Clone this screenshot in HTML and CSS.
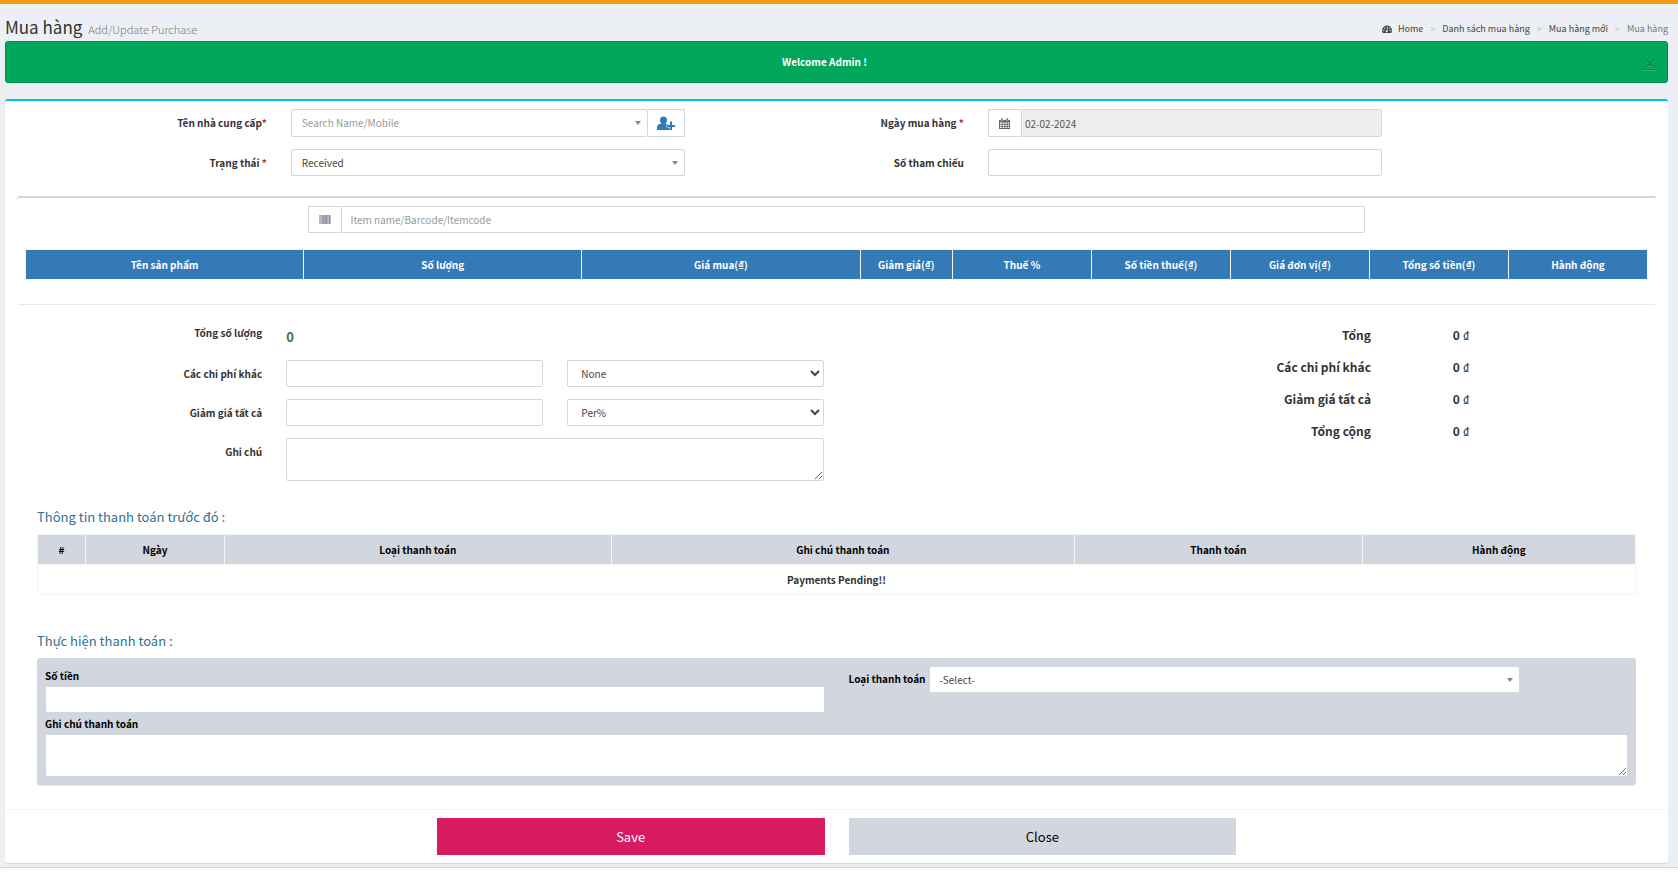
FILE: index.html
```html
<!DOCTYPE html>
<html lang="vi">
<head>
    <meta charset="UTF-8">
    <meta name="viewport" content="width=device-width, initial-scale=1.0">
    <title>Mua hàng</title>
    <link rel="stylesheet" href="styles.css">
</head>
<body>
    <div class="content-wrapper">
        <header class="content-header">
            <h1>Mua hàng <small>Add/Update Purchase</small></h1>
            <nav>
                <ol class="breadcrumb">
                    <li>
                        <a href="#">
                            <svg class="icon-dashboard" viewBox="0 0 20 16" aria-hidden="true">
                                <path fill="#444" d="M10 1a10 10 0 0 0-8.400 15h16.800A10 10 0 0 0 10 1z"/>
                                <g fill="#ecf0f5">
                                    <circle cx="3.600" cy="11" r="1.300"/>
                                    <circle cx="5.500" cy="6.400" r="1.300"/>
                                    <circle cx="10" cy="4.400" r="1.300"/>
                                    <circle cx="14.500" cy="6.400" r="1.300"/>
                                    <circle cx="16.400" cy="11" r="1.300"/>
                                    <path d="M11.600 6.500l-1 4.200a2.100 2.100 0 1 1-1.300-.3l1.200-4.200z"/>
                                </g>
                            </svg>
                            Home
                        </a>
                    </li>
                    <li><a href="#">Danh sách mua hàng</a></li>
                    <li><a href="#">Mua hàng mới</a></li>
                    <li class="active">Mua hàng</li>
                </ol>
            </nav>
        </header>

        <div class="alert">
            <strong>Welcome Admin !</strong>
            <a href="#" class="close" aria-label="close">×</a>
        </div>

        <form class="box">
            <div class="form-grid">
                <label for="supplier">Tên nhà cung cấp<span class="required">*</span></label>
                <div class="input-group">
                    <div class="select2">
                        <select id="supplier" class="form-control placeholder">
                            <option>Search Name/Mobile</option>
                        </select>
                    </div>
                    <button type="button" class="addon addon-user" aria-label="New supplier">
                        <svg viewBox="0 0 18 14" aria-hidden="true">
                            <path fill="#337ab7" d="M6.500 0.500C8.700.5 10 2 10 4c0 1.500-.6 2.700-1.500 3.400 1 .3 2 .6 2.700 1.100H9.500v3h3V14H0v-2.500C0 9 1.500 8 4.600 7.400 3.600 6.700 3 5.500 3 4c0-2 1.300-3.500 3.500-3.500z"/>
                            <path fill="#337ab7" d="M13 5.500h2V9h3v2h-3v3h-2v-3h-3V9h3z"/>
                        </svg>
                    </button>
                </div>
                <label for="purchaseDate">Ngày mua hàng <span class="required">*</span></label>
                <div class="input-group">
                    <span class="addon">
                        <svg class="icon-calendar" viewBox="0 0 12 12" aria-hidden="true">
                            <path fill="#666" d="M0 2h12v10H0z"/>
                            <path fill="#fff" d="M1 5h2v1.500H1zM4 5h2v1.500H4zM7 5h1.500v1.500H7zM9.500 5H11v1.500H9.500zM1 7.300h2v1.500H1zM4 7.300h2v1.500H4zM7 7.300h1.500v1.500H7zM9.500 7.300H11v1.500H9.500zM1 9.600h2V11H1zM4 9.600h2V11H4zM7 9.600h1.500V11H7zM9.500 9.600H11V11H9.500z"/>
                            <path fill="#666" stroke="#fff" stroke-width=".4" d="M2.200 0h1.800v3.200H2.200zM8 0h1.800v3.200H8z"/>
                        </svg>
                    </span>
                    <input type="text" id="purchaseDate" class="form-control date" value="02-02-2024" readonly>
                </div>

                <label for="status">Trạng thái <span class="required">*</span></label>
                <div class="select2">
                    <select id="status" class="form-control">
                        <option>Received</option>
                    </select>
                </div>
                <label for="reference">Số tham chiếu</label>
                <div>
                    <input type="text" id="reference" class="form-control">
                </div>
            </div>

            <section class="items-box">
                <div class="input-group item-search">
                    <span class="addon">
                        <svg class="icon-barcode" viewBox="0 0 12 10" aria-hidden="true">
                            <path fill="#a3a3ad" d="M0 0h12v10H0z"/>
                            <path fill="#8c8c99" d="M0 0h1v10H0zM7 0h1v10H7zM10 0h2v10h-2z"/>
                            <path fill="#d8d4dc" d="M1 0h1v10H1zM9 0h1v10H9z"/>
                        </svg>
                    </span>
                    <input type="text" class="form-control" placeholder="Item name/Barcode/Itemcode" aria-label="Item name/Barcode/Itemcode">
                </div>
                <table class="table items-table">
                    <thead>
                        <tr>
                            <th class="col-wide">Tên sản phẩm</th>
                            <th class="col-wide">Số lượng</th>
                            <th class="col-wide">Giá mua(₫)</th>
                            <th class="col-discount">Giảm giá(₫)</th>
                            <th>Thuế %</th>
                            <th>Số tiền thuế(₫)</th>
                            <th>Giá đơn vị(₫)</th>
                            <th>Tổng số tiền(₫)</th>
                            <th>Hành động</th>
                        </tr>
                    </thead>
                    <tbody></tbody>
                </table>
            </section>

            <div class="summary">
                <div class="charges">
                    <span class="label">Tổng số lượng</span>
                    <output class="total-qty">0</output>

                    <label for="otherCharges">Các chi phí khác</label>
                    <input type="text" id="otherCharges" class="form-control">
                    <select class="form-control native" aria-label="Các chi phí khác">
                        <option>None</option>
                    </select>

                    <label for="discountAll">Giảm giá tất cả</label>
                    <input type="text" id="discountAll" class="form-control">
                    <select class="form-control native" aria-label="Giảm giá tất cả">
                        <option>Per%</option>
                        <option>Fixed</option>
                    </select>

                    <label for="note">Ghi chú</label>
                    <textarea id="note" class="form-control note"></textarea>
                </div>

                <dl class="totals">
                    <dt>Tổng</dt>
                    <dd><b>0</b> ₫</dd>
                    <dt>Các chi phí khác</dt>
                    <dd><b>0</b> ₫</dd>
                    <dt>Giảm giá tất cả</dt>
                    <dd><b>0</b> ₫</dd>
                    <dt>Tổng cộng</dt>
                    <dd><b>0</b> ₫</dd>
                </dl>
            </div>

            <section class="payments">
                <h4>Thông tin thanh toán trước đó :</h4>
                <table class="table payments-table">
                    <thead>
                        <tr>
                            <th class="col-no">#</th>
                            <th class="col-date">Ngày</th>
                            <th class="col-type">Loại thanh toán</th>
                            <th class="col-note">Ghi chú thanh toán</th>
                            <th class="col-amount">Thanh toán</th>
                            <th>Hành động</th>
                        </tr>
                    </thead>
                    <tbody>
                        <tr>
                            <td colspan="6">Payments Pending!!</td>
                        </tr>
                    </tbody>
                </table>
            </section>

            <section class="payments">
                <h4>Thực hiện thanh toán :</h4>
                <div class="payment-panel">
                    <div class="payment-row">
                        <div class="payment-field">
                            <label for="amount">Số tiền</label>
                            <input type="text" id="amount" class="form-control">
                        </div>
                        <div class="payment-type">
                            <label for="paymentType">Loại thanh toán</label>
                            <div class="select2">
                                <select id="paymentType" class="form-control">
                                    <option>-Select-</option>
                                </select>
                            </div>
                        </div>
                    </div>
                    <div class="payment-field">
                        <label for="paymentNote">Ghi chú thanh toán</label>
                        <textarea id="paymentNote" class="form-control"></textarea>
                    </div>
                </div>
            </section>

            <div class="box-footer">
                <button type="button" class="btn btn-save">Save</button>
                <button type="button" class="btn btn-close">Close</button>
            </div>
        </form>
    </div>
</body>
</html>
```

FILE: styles.css
```css
* {
    margin: 0;
    padding: 0;
    box-sizing: border-box;
}

body {
    background: #fff;
    color: #333;
    font-family: "Noto Sans CJK SC", "Noto Sans", sans-serif;
    font-size: 10px;
    line-height: 16px;
}

a {
    color: #444;
    text-decoration: none;
}

input,
select,
textarea,
button {
    font: inherit;
}

.content-wrapper {
    background: #ecf0f5;
    border-top: 4px solid #f39c12;
    border-bottom: 1px solid #d2d6de;
    padding: 12px 10px 4px 5px;
}

/* Page title and breadcrumb */
.content-header {
    display: flex;
    justify-content: space-between;
    height: 25px;
}

.content-header h1 {
    font-size: 17px;
    font-weight: normal;
    line-height: 22px;
}

.content-header small {
    font-size: 11px;
    font-weight: 300;
    color: #777;
    padding-left: 2px;
}

.breadcrumb {
    display: flex;
    list-style: none;
    font-size: 9px;
    line-height: 26px;
}

.breadcrumb li + li::before {
    content: ">";
    color: #bbb;
    padding: 0 7px;
}

.breadcrumb .active {
    color: #777;
}

.icon-dashboard {
    width: 10px;
    height: 8px;
    margin-right: 4px;
    vertical-align: -1px;
}

.alert {
    display: flex;
    align-items: center;
    height: 42px;
    padding-right: 10px;
    margin-bottom: 16px;
    background: #00a65a;
    border: 1px solid #008d4c;
    border-radius: 3px;
    color: #fff;
}

.alert strong {
    flex: 1;
    text-align: center;
}

.alert .close {
    font-size: 14px;
    font-weight: bold;
    color: #000;
    opacity: 0.2;
    text-decoration: underline;
    text-shadow: 0 1px 0 #fff;
}

.box {
    background: #fff;
    border-top: 2px solid #00c0ef;
    border-radius: 3px;
    box-shadow: 0 1px 1px rgba(0, 0, 0, 0.1);
    padding-top: 8px;
}

/* Form controls */
label,
.label {
    font-weight: bold;
}

.required {
    color: #b5302b;
}

.form-control {
    display: block;
    width: 100%;
    height: 27px;
    padding: 0 10px;
    background: #fff;
    border: 1px solid #d2d6de;
    border-radius: 2px;
    color: #444;
}

.form-control::placeholder,
.form-control.placeholder {
    color: #999;
}

.form-control[readonly] {
    background: #eee;
    color: #555;
    padding-left: 3px;
}

.form-control.native {
    padding: 0 9px;
}

textarea.form-control {
    height: 43px;
    resize: vertical;
}

.input-group {
    display: flex;
}

.input-group .form-control {
    flex: 1;
}

.addon {
    display: flex;
    justify-content: center;
    align-items: center;
    width: 33px;
    border: 1px solid #d2d6de;
    border-right: 0;
    background: #fff;
}

.addon-user {
    width: 37px;
    border-right: 1px solid #d2d6de;
    border-left: 0;
}

.addon-user svg {
    width: 18px;
    height: 14px;
}

.icon-calendar {
    width: 11px;
    height: 11px;
}

.icon-barcode {
    width: 12px;
    height: 9px;
}

.select2 {
    position: relative;
    flex: 1;
}

.select2 select {
    appearance: none;
}

.select2::after {
    content: "";
    position: absolute;
    top: 50%;
    right: 7px;
    margin-top: -2px;
    border: 3px solid transparent;
    border-top: 4px solid #888;
    border-bottom: 0;
    pointer-events: none;
}

.form-grid {
    display: grid;
    grid-template-columns: 2fr 3fr 2fr 3fr 2fr;
    row-gap: 12px;
    margin: 0 -5px;
    padding-bottom: 20px;
}

.form-grid > * {
    margin: 0 12px;
}

.form-grid > label {
    text-align: right;
    padding-top: 6px;
}

.form-grid > :nth-child(4n + 1) {
    grid-column: 1;
}

.form-grid .input-group .form-control {
    height: 28px;
}

/* Items */
.items-box {
    margin: 0 12px;
    padding: 8px 8px 24px;
    border-top: 2px solid #d2d6de;
    border-radius: 3px;
    box-shadow: 0 1px 1px rgba(0, 0, 0, 0.1);
}

.item-search {
    width: calc(100% * 8 / 12 - 24px);
    margin: 0 auto 16px;
}

.item-search .form-control {
    padding: 0 9px;
}

.table {
    width: 100%;
    table-layout: fixed;
    border-collapse: collapse;
}

.table th,
.table td {
    height: 30px;
    border: 1px solid #f4f4f4;
    text-align: center;
    font-weight: bold;
}

.items-table th {
    background: #337ab7;
    color: #fff;
}

.col-wide { width: 17.15%; }
.col-discount { width: 5.7%; }
.col-no { width: 3%; }
.col-date { width: 8.7%; }
.col-type { width: 24.2%; }
.col-note { width: 29%; }
.col-amount { width: 18%; }

/* Charges and totals */
.summary {
    display: grid;
    grid-template-columns: 1fr 1fr;
    column-gap: 24px;
    padding-top: 21px;
}

.charges {
    display: grid;
    grid-template-columns: 1fr 1fr 1fr;
    gap: 12px 24px;
}

.charges label,
.charges .label {
    text-align: right;
    padding-top: 6px;
}

.charges .label {
    padding-top: 0;
    height: 23px;
}

.total-qty {
    grid-column: span 2;
    height: 23px;
    padding-top: 4px;
    font-size: 13px;
    font-weight: bold;
    color: #3c763d;
}

.note {
    grid-column: span 2;
}

.totals {
    display: grid;
    grid-template-columns: 64% 12%;
    grid-auto-rows: 32px;
    font-size: 12px;
    line-height: 20px;
    text-align: right;
}

.totals dt,
.totals dd {
    padding-right: 2px;
}

.totals dt {
    font-weight: bold;
}

/* Payments */
.payments {
    margin: 0 32px;
    padding-top: 26px;
}

.payments h4 {
    font-size: 13px;
    font-weight: normal;
    line-height: 20px;
    margin-bottom: 7px;
    color: #31708f;
}

.payments-table {
    margin-bottom: 10px;
}

.payments-table th {
    background: #d2d6de;
    color: #000;
}

.payment-panel {
    padding: 8px;
    background: #d2d6de;
    border-radius: 3px;
    box-shadow: 0 1px 1px rgba(0, 0, 0, 0.1);
    color: #000;
}

.payment-row {
    display: grid;
    grid-template-columns: 1fr 1fr;
    column-gap: 24px;
    margin-bottom: 1px;
}

.payment-field label {
    display: block;
    line-height: 20px;
}

.payment-type {
    display: flex;
    align-items: flex-start;
    gap: 3px;
    padding-right: 108px;
}

.payment-type label {
    line-height: 26px;
}

.box-footer {
    display: grid;
    grid-template-columns: repeat(4, 1fr);
    column-gap: 24px;
    margin-top: 24px;
    padding: 8px 20px;
    border-top: 1px solid #f4f4f4;
}

.btn {
    height: 37px;
    border: 0;
    font-size: 13px;
    cursor: pointer;
}

.btn-save {
    grid-column: 2;
    background: #d81b60;
    color: #fff;
}

.btn-close {
    background: #d2d6de;
    color: #000;
}
```
